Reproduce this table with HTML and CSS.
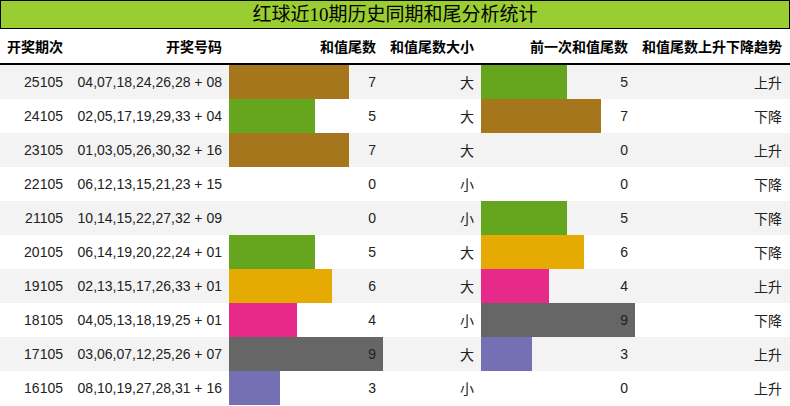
FILE: index.html
```html
<!DOCTYPE html>
<html lang="zh">
<head>
<meta charset="utf-8">
<title>红球近10期历史同期和尾分析统计</title>
<link rel="stylesheet" href="styles.css">
</head>
<body>
<div class="chart">
  <div class="title">红球近10期历史同期和尾分析统计</div>
  <div class="row head">
    <div class="cell">开奖期次</div>
    <div class="cell">开奖号码</div>
    <div class="cell">和值尾数</div>
    <div class="cell">和值尾数大小</div>
    <div class="cell">前一次和值尾数</div>
    <div class="cell">和值尾数上升下降趋势</div>
  </div>
  <div class="row">
    <div class="cell">25105</div><div class="cell">04,07,18,24,26,28 + 08</div>
    <div class="cell bar-cell"><span class="bar c7" style="width:77.9%"></span><span class="val">7</span></div>
    <div class="cell">大</div>
    <div class="cell bar-cell"><span class="bar c5" style="width:55.8%"></span><span class="val">5</span></div>
    <div class="cell">上升</div>
  </div>
  <div class="row">
    <div class="cell">24105</div><div class="cell">02,05,17,19,29,33 + 04</div>
    <div class="cell bar-cell"><span class="bar c5" style="width:55.8%"></span><span class="val">5</span></div>
    <div class="cell">大</div>
    <div class="cell bar-cell"><span class="bar c7" style="width:77.9%"></span><span class="val">7</span></div>
    <div class="cell">下降</div>
  </div>
  <div class="row">
    <div class="cell">23105</div><div class="cell">01,03,05,26,30,32 + 16</div>
    <div class="cell bar-cell"><span class="bar c7" style="width:77.9%"></span><span class="val">7</span></div>
    <div class="cell">大</div>
    <div class="cell bar-cell"><span class="val">0</span></div>
    <div class="cell">上升</div>
  </div>
  <div class="row">
    <div class="cell">22105</div><div class="cell">06,12,13,15,21,23 + 15</div>
    <div class="cell bar-cell"><span class="val">0</span></div>
    <div class="cell">小</div>
    <div class="cell bar-cell"><span class="val">0</span></div>
    <div class="cell">下降</div>
  </div>
  <div class="row">
    <div class="cell">21105</div><div class="cell">10,14,15,22,27,32 + 09</div>
    <div class="cell bar-cell"><span class="val">0</span></div>
    <div class="cell">小</div>
    <div class="cell bar-cell"><span class="bar c5" style="width:55.8%"></span><span class="val">5</span></div>
    <div class="cell">下降</div>
  </div>
  <div class="row">
    <div class="cell">20105</div><div class="cell">06,14,19,20,22,24 + 01</div>
    <div class="cell bar-cell"><span class="bar c5" style="width:55.8%"></span><span class="val">5</span></div>
    <div class="cell">大</div>
    <div class="cell bar-cell"><span class="bar c6" style="width:66.9%"></span><span class="val">6</span></div>
    <div class="cell">下降</div>
  </div>
  <div class="row">
    <div class="cell">19105</div><div class="cell">02,13,15,17,26,33 + 01</div>
    <div class="cell bar-cell"><span class="bar c6" style="width:66.9%"></span><span class="val">6</span></div>
    <div class="cell">大</div>
    <div class="cell bar-cell"><span class="bar c4" style="width:44.2%"></span><span class="val">4</span></div>
    <div class="cell">上升</div>
  </div>
  <div class="row">
    <div class="cell">18105</div><div class="cell">04,05,13,18,19,25 + 01</div>
    <div class="cell bar-cell"><span class="bar c4" style="width:44.2%"></span><span class="val">4</span></div>
    <div class="cell">小</div>
    <div class="cell bar-cell"><span class="bar c9" style="width:100%"></span><span class="val">9</span></div>
    <div class="cell">下降</div>
  </div>
  <div class="row">
    <div class="cell">17105</div><div class="cell">03,06,07,12,25,26 + 07</div>
    <div class="cell bar-cell"><span class="bar c9" style="width:100%"></span><span class="val">9</span></div>
    <div class="cell">大</div>
    <div class="cell bar-cell"><span class="bar c3" style="width:33.1%"></span><span class="val">3</span></div>
    <div class="cell">上升</div>
  </div>
  <div class="row">
    <div class="cell">16105</div><div class="cell">08,10,19,27,28,31 + 16</div>
    <div class="cell bar-cell"><span class="bar c3" style="width:33.1%"></span><span class="val">3</span></div>
    <div class="cell">小</div>
    <div class="cell bar-cell"><span class="val">0</span></div>
    <div class="cell">上升</div>
  </div>
</div>
</body>
</html>
```
FILE: styles.css
```css
html, body {
  margin: 0;
  padding: 0;
  background: #ffffff;
}
.chart {
  width: 790px;
  font-family: "Liberation Sans", "Noto Sans CJK SC", sans-serif;
  font-size: 14px;
  color: #222222;
}
.title {
  height: 27px;
  border: 1px solid #000000;
  background: #9acd32;
  color: #000000;
  font-family: "Liberation Serif", "Noto Sans CJK SC", serif;
  font-size: 19px;
  line-height: 27px;
  text-align: center;
}
.row {
  display: grid;
  grid-template-columns: 70px 159px 154px 98px 154px 155px;
  height: 34px;
}
.row:nth-child(odd) {
  background: #f3f3f3;
}
.row.head {
  height: 34px;
  background: #ffffff;
  border-bottom: 2px solid #000000;
  font-weight: bold;
  color: #000000;
}
.cell {
  display: flex;
  align-items: center;
  justify-content: flex-end;
  padding-right: 7px;
  white-space: nowrap;
}
.cell:last-child {
  padding-right: 8px;
}
.bar-cell {
  position: relative;
}
.bar {
  position: absolute;
  left: 0;
  top: 0;
  bottom: 0;
}
.val {
  position: relative;
}
.c3 { background: #7570b3; }
.c4 { background: #e7298a; }
.c5 { background: #66a61e; }
.c6 { background: #e6ab02; }
.c7 { background: #a6761d; }
.c9 { background: #666666; }
```
